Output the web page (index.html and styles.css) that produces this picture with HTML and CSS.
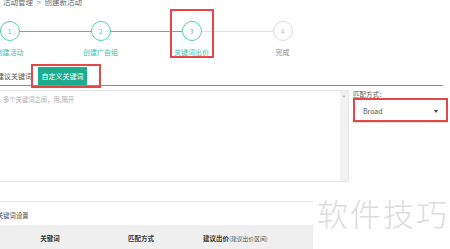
FILE: index.html
```html
<!DOCTYPE html>
<html lang="zh">
<head>
<meta charset="utf-8">
<link rel="stylesheet" href="styles.css">
</head>
<body>
<div class="crumb">推广活动管理 <span class="sep">&gt;</span> 创建新活动</div>
<div class="steps">
  <div class="step done"><div class="circle">1</div><div class="label">创建活动</div></div>
  <div class="step done"><div class="circle">2</div><div class="label">创建广告组</div></div>
  <div class="step current"><div class="circle">3</div><div class="label">关键词出价</div></div>
  <div class="step todo"><div class="circle">4</div><div class="label">完成</div></div>
</div>
<div class="tabs">
  <div class="tab tab-suggest">建议关键词</div>
  <div class="tab tab-active">自定义关键词</div>
</div>
<div class="editor">
  <div class="kw-box">
    <div class="kw-input">多个关键词之间，用,隔开</div>
    <div class="scroll"><span class="arrow-up"></span></div>
  </div>
  <div class="match">
    <div class="match-label">匹配方式：</div>
    <div class="select"><span>Broad</span><span class="caret"></span></div>
  </div>
</div>
<div class="settings">
  <div class="settings-title">关键词设置</div>
  <div class="thead">
    <div class="th c1">关键词</div>
    <div class="th c2">匹配方式</div>
    <div class="th c3"><b>建议出价</b><span class="sub">(建议出价区间)</span></div>
  </div>
</div>
<div class="watermark">软件技巧</div>
<div class="mark mark-step"></div>
<div class="mark mark-tab"></div>
<div class="mark mark-select"></div>
</body>
</html>
```
FILE: styles.css
```css
* { box-sizing: border-box; }
html, body { margin: 0; padding: 0; }
body {
  width: 450px;
  height: 249px;
  overflow: hidden;
  position: relative;
  background: #fff;
  font-family: "Noto Sans CJK SC", "Noto Sans", sans-serif;
  color: #555;
}
.crumb {
  margin-top: -3px;
  margin-left: -12px;
  height: 10px;
  line-height: 10px;
  font-size: 7.5px;
  color: #666;
  white-space: nowrap;
}
.crumb .sep { color: #888; margin: 0 2px; }

.steps {
  display: flex;
  margin-left: -36px;
  margin-top: 14px;
}
.step {
  width: 91px;
  display: flex;
  flex-direction: column;
  align-items: center;
  position: relative;
}
.step::before, .step::after {
  content: "";
  position: absolute;
  top: 10px;
  height: 1px;
  width: 50%;
  background: #3fc3a5;
}
.step::before { left: 0; }
.step::after { left: 50%; }
.step.current::after { background: #e2e2e2; }
.step.todo::before { background: #e2e2e2; }
.step.todo::after { display: none; }
.circle {
  position: relative;
  z-index: 1;
  width: 20px;
  height: 20px;
  border: 1px solid #4fcfb2;
  border-radius: 50%;
  background: #fff;
  font-size: 6.5px;
  color: #47c8aa;
  display: flex;
  align-items: center;
  justify-content: center;
}
.step.todo .circle { border-color: #dcdcdc; color: #bbb; }
.label {
  margin-top: 6px;
  font-size: 7px;
  line-height: 10px;
  color: #43c2a5;
  white-space: nowrap;
}
.step.todo .label { color: #888; }

.tabs {
  display: flex;
  align-items: flex-end;
  margin-top: 10px;
  width: 443px;
  height: 19px;
  border-bottom: 1px solid #2fb898;
}
.tab {
  height: 18px;
  line-height: 18px;
  font-size: 7px;
  white-space: nowrap;
}
.tab-suggest {
  margin-left: -11px;
  width: 49px;
  text-align: right;
  padding-right: 6px;
  color: #555;
}
.tab-active {
  width: 49px;
  text-align: center;
  background: #1cad8d;
  color: #fff;
}

.editor {
  display: flex;
  margin-top: 4px;
}
.kw-box {
  margin-left: -1px;
  width: 350px;
  height: 92px;
  border: 1px solid #e6e6e6;
  display: flex;
}
.kw-input {
  flex: 1;
  padding: 4px 3px;
  font-size: 6.3px;
  line-height: 10px;
  color: #aaa;
}
.scroll {
  width: 8px;
  background: #f1f1f1;
  display: flex;
  justify-content: center;
  padding-top: 4px;
}
.arrow-up {
  width: 0;
  height: 0;
  border-left: 1.5px solid transparent;
  border-right: 1.5px solid transparent;
  border-bottom: 2px solid #999;
}
.match {
  margin-left: 4px;
  width: 95px;
}
.match-label {
  height: 9px;
  line-height: 9px;
  font-size: 6.5px;
  color: #555;
  white-space: nowrap;
}
.select {
  height: 24px;
  border: 1px solid #ddd;
  display: flex;
  align-items: center;
  justify-content: space-between;
  padding: 0 9px 0 9px;
  font-size: 7px;
  color: #555;
}
.caret {
  width: 0;
  height: 0;
  border-left: 2px solid transparent;
  border-right: 2px solid transparent;
  border-top: 3px solid #444;
}

.settings {
  margin-top: 19px;
  border-top: 1px solid #e6e6e6;
}
.settings-title {
  margin-top: 9px;
  margin-left: -3px;
  height: 10px;
  line-height: 10px;
  font-size: 6.3px;
  color: #444;
}
.thead {
  margin-top: 4px;
  height: 26px;
  background: #efefef;
  display: grid;
  grid-template-columns: 100px 82px 1fr;
  align-items: center;
  font-size: 6.5px;
  color: #333;
}
.th { line-height: 24px; white-space: nowrap; }
.c1, .c2 { text-align: center; font-weight: 600; }
.c3 { padding-left: 21px; }
.c3 b { font-weight: 600; }
.c3 .sub { font-size: 5.8px; color: #555; }

.watermark {
  position: absolute;
  left: 313px;
  top: 190px;
  width: 137px;
  height: 59px;
  background: #fff;
  padding-left: 4px;
  line-height: 45px;
  font-size: 31px;
  letter-spacing: 2px;
  color: #dcdcdc;
  font-weight: 300;
  white-space: nowrap;
}

.mark {
  position: absolute;
  border: 2px solid #e2474a;
}
.mark-step { left: 170px; top: 9px; width: 44px; height: 49px; }
.mark-tab { left: 31px; top: 64px; width: 70px; height: 24px; }
.mark-select { left: 353px; top: 98px; width: 95px; height: 24px; }
```
